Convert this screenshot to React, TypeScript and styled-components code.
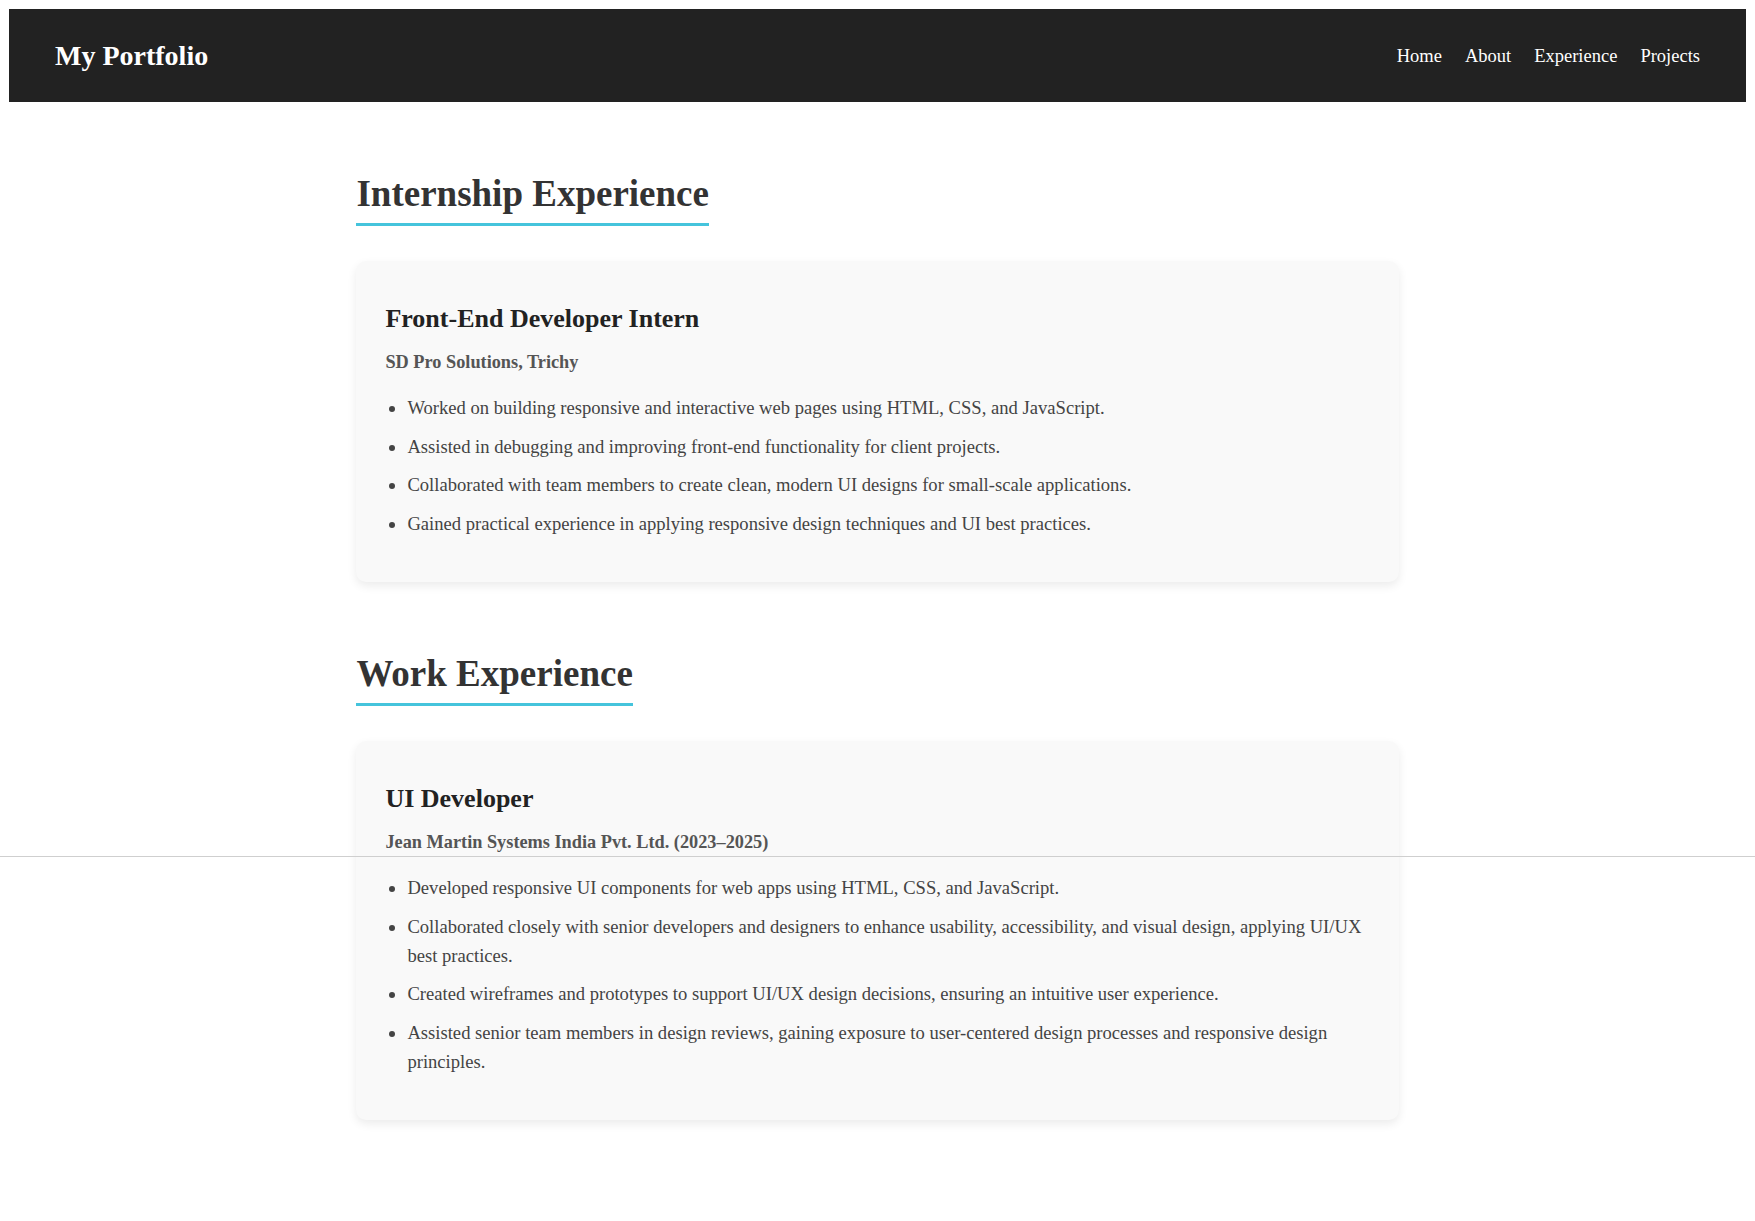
import * as React from "react";
import styled, { createGlobalStyle } from "styled-components";

interface Job {
  title: string;
  company: string;
  points: string[];
}

const internships: Job[] = [
  {
    title: "Front-End Developer Intern",
    company: "SD Pro Solutions, Trichy",
    points: [
      "Worked on building responsive and interactive web pages using HTML, CSS, and JavaScript.",
      "Assisted in debugging and improving front-end functionality for client projects.",
      "Collaborated with team members to create clean, modern UI designs for small-scale applications.",
      "Gained practical experience in applying responsive design techniques and UI best practices."
    ]
  }
];

const jobs: Job[] = [
  {
    title: "UI Developer",
    company: "Jean Martin Systems India Pvt. Ltd. (2023–2025)",
    points: [
      "Developed responsive UI components for web apps using HTML, CSS, and JavaScript.",
      "Collaborated closely with senior developers and designers to enhance usability, accessibility, and visual design, applying UI/UX best practices.",
      "Created wireframes and prototypes to support UI/UX design decisions, ensuring an intuitive user experience.",
      "Assisted senior team members in design reviews, gaining exposure to user-centered design processes and responsive design principles."
    ]
  }
];

const links = ["Home", "About", "Experience", "Projects"];

const Section = ({ heading, items }: { heading: string; items: Job[] }) => (
  <SectionWrapper>
    <SectionTitle>{heading}</SectionTitle>
    {items.map(job => (
      <Card key={job.title}>
        <JobTitle>{job.title}</JobTitle>
        <Company>{job.company}</Company>
        <Points>
          {job.points.map(p => (
            <Point key={p}>{p}</Point>
          ))}
        </Points>
      </Card>
    ))}
  </SectionWrapper>
);

export default function App() {
  return (
    <>
      <GlobalStyle />
      <NavBar>
        <Brand>My Portfolio</Brand>
        <NavLinks>
          {links.map(l => (
            <NavLink key={l} href="#">
              {l}
            </NavLink>
          ))}
        </NavLinks>
      </NavBar>
      <Main>
        <Section heading="Internship Experience" items={internships} />
        <Section heading="Work Experience" items={jobs} />
      </Main>
      <FoldLine />
    </>
  );
}

const GlobalStyle = createGlobalStyle`
  body {
    margin: 9px;
    background: #fff;
    font-family: "Liberation Serif", "Times New Roman", serif;
    line-height: 1.6;
    color: #333;
  }
`;

const NavBar = styled.header`
  height: 93px;
  padding: 0 46px;
  background-color: #222;
  display: flex;
  align-items: center;
  justify-content: space-between;
`;

const Brand = styled.h1`
  margin: 0;
  font-size: 28px;
  font-weight: bold;
  line-height: 1.2;
  color: #fff;
`;

const NavLinks = styled.nav`
  display: flex;
  gap: 23px;
`;

const NavLink = styled.a`
  color: #fff;
  text-decoration: none;
  font-size: 18.5px;
  line-height: 1.2;
  position: relative;
  top: 1px;
`;

const Main = styled.main`
  width: 60%;
  margin: 0 auto;
  padding-bottom: 60px;
`;

const SectionWrapper = styled.section`
  padding-top: 70px;
`;

const SectionTitle = styled.h2`
  display: inline-block;
  margin: 0 0 35px;
  padding-bottom: 7px;
  font-size: 37px;
  line-height: 44px;
  font-weight: bold;
  color: #333;
  border-bottom: 3px solid #45c4dc;
`;

const Card = styled.div`
  background-color: #f9f9f9;
  border-radius: 10px;
  padding: 29px 29px 33px;
  box-shadow: 0 4px 10px rgba(0, 0, 0, 0.08);
`;

const JobTitle = styled.h3`
  margin: 8px 0;
  font-size: 26px;
  font-weight: bold;
  color: #222;
`;

const Company = styled.p`
  margin: 0 0 17px;
  font-size: 18.3px;
  font-weight: bold;
  color: #555;
`;

const Points = styled.ul`
  margin: 0;
  padding-left: 22px;
`;

const Point = styled.li`
  margin-bottom: 10px;
  font-size: 18.6px;
  line-height: 28.8px;
  color: #444;
`;

const FoldLine = styled.div`
  position: absolute;
  top: 856px;
  left: 0;
  right: 0;
  height: 1px;
  background-color: #cfcfcf;
  pointer-events: none;
`;
